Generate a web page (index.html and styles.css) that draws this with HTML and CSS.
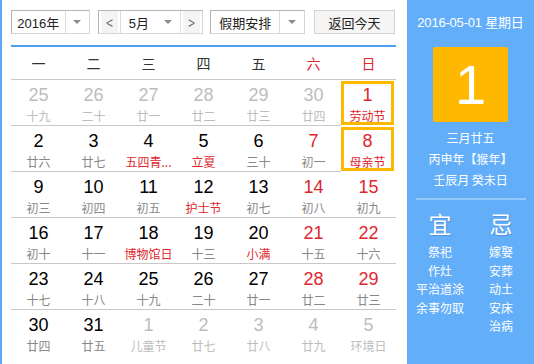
FILE: index.html
```html
<!DOCTYPE html>
<html lang="zh-CN">

<head>
    <meta charset="utf-8">
    <link rel="stylesheet" href="styles.css">
</head>

<body>
    <div class="calendar">
        <div class="calendar__main">
            <div class="toolbar">
                <div class="select select--year">
                    <span class="select__value">2016年</span>
                    <span class="select__arrow"></span>
                </div>
                <div class="month-picker">
                    <span class="month-picker__btn">&lt;</span>
                    <div class="select select--month">
                        <span class="select__value">5月</span>
                        <span class="select__arrow"></span>
                    </div>
                    <span class="month-picker__btn">&gt;</span>
                </div>
                <div class="select select--holiday">
                    <span class="select__value">假期安排</span>
                    <span class="select__arrow"></span>
                </div>
                <button class="today-btn">返回今天</button>
            </div>

            <div class="weekdays">
                <span>一</span><span>二</span><span>三</span><span>四</span><span>五</span>
                <span class="red">六</span><span class="red">日</span>
            </div>

            <div class="days" id="days"></div>
        </div>

        <div class="calendar__side">
            <div class="side__date">2016-05-01 星期日</div>
            <div class="side__day">1</div>
            <div class="side__lunar">
                <p>三月廿五</p>
                <p>丙申年【猴年】</p>
                <p>壬辰月 癸未日</p>
            </div>
            <div class="side__divider"></div>
            <div class="side__advice">
                <div class="advice">
                    <div class="advice__title">宜</div>
                    <p>祭祀</p>
                    <p>作灶</p>
                    <p>平治道涂</p>
                    <p>余事勿取</p>
                </div>
                <div class="advice">
                    <div class="advice__title">忌</div>
                    <p>嫁娶</p>
                    <p>安葬</p>
                    <p>动土</p>
                    <p>安床</p>
                    <p>治病</p>
                </div>
            </div>
        </div>
    </div>

    <script>
        // [day, lunar, flags] flags: o = other month, r = red number, f = festival, s = selected
        const days = [
            ['25', '十九', 'o'], ['26', '二十', 'o'], ['27', '廿一', 'o'], ['28', '廿二', 'o'], ['29', '廿三', 'o'], ['30', '廿四', 'o'], ['1', '劳动节', 'rfs'],
            ['2', '廿六', ''], ['3', '廿七', ''], ['4', '五四青...', 'f'], ['5', '立夏', 'f'], ['6', '三十', ''], ['7', '初一', 'r'], ['8', '母亲节', 'rfs'],
            ['9', '初三', ''], ['10', '初四', ''], ['11', '初五', ''], ['12', '护士节', 'f'], ['13', '初七', ''], ['14', '初八', 'r'], ['15', '初九', 'r'],
            ['16', '初十', ''], ['17', '十一', ''], ['18', '博物馆日', 'f'], ['19', '十三', ''], ['20', '小满', 'f'], ['21', '十五', 'r'], ['22', '十六', 'r'],
            ['23', '十七', ''], ['24', '十八', ''], ['25', '十九', ''], ['26', '二十', ''], ['27', '廿一', ''], ['28', '廿二', 'r'], ['29', '廿三', 'r'],
            ['30', '廿四', ''], ['31', '廿五', ''], ['1', '儿童节', 'o'], ['2', '廿七', 'o'], ['3', '廿八', 'o'], ['4', '廿九', 'o'], ['5', '环境日', 'o']
        ];

        const grid = document.getElementById('days');
        days.forEach(([num, lunar, flags]) => {
            const cell = document.createElement('div');
            cell.className = 'day';
            if (flags.includes('o')) cell.classList.add('day--other');
            if (flags.includes('r')) cell.classList.add('day--red');
            if (flags.includes('f')) cell.classList.add('day--festival');
            if (flags.includes('s')) cell.classList.add('day--selected');
            cell.innerHTML = '<span class="day__num">' + num + '</span><span class="day__lunar">' + lunar + '</span>';
            grid.appendChild(cell);
        });
    </script>
</body>

</html>
```

FILE: styles.css
```css
*,
*::after,
*::before {
    box-sizing: border-box;
}

body {
    margin: 0;
    font-family: "Liberation Sans", "Noto Sans CJK SC", sans-serif;
    background: #fff;
}

p {
    margin: 0;
}

.calendar {
    display: flex;
    width: 534px;
    height: 364px;
    border-left: 2px solid #5aa8f6;
}

.calendar__main {
    width: 405px;
    padding: 10px 11px 0 9px;
}

/* toolbar */
.toolbar {
    display: flex;
    height: 24px;
    font-size: 13px;
    color: #222;
}

.select {
    display: flex;
    border: 1px solid #b4b4b4;
    border-right-color: #d6d6d6;
    border-bottom-color: #d6d6d6;
    background: #fff;
}

.select__value {
    display: flex;
    align-items: center;
    justify-content: center;
    border-right: 1px solid #dcdcdc;
}

.select__arrow {
    display: flex;
    align-items: center;
    justify-content: center;
    width: 24px;
}

.select__arrow::after {
    content: "";
    border-left: 4px solid transparent;
    border-right: 4px solid transparent;
    border-top: 4px solid #8c8c8c;
}

.select--year {
    width: 79px;
}

.select--year .select__value {
    width: 55px;
}

.month-picker {
    display: flex;
    margin-left: 8px;
    width: 105px;
    border: 1px solid #b4b4b4;
    border-right-color: #d6d6d6;
    border-bottom-color: #d6d6d6;
}

.month-picker__btn {
    display: flex;
    align-items: center;
    justify-content: center;
    width: 21px;
    background: #f4f4f4;
    color: #666;
    font-size: 15px;
    transform: scaleX(0.8);
}

.select--month {
    border: none;
    border-left: 1px solid #dcdcdc;
    border-right: 1px solid #dcdcdc;
    width: 61px;
}

.select--month .select__value {
    width: 37px;
    border-right: none;
}

.select--holiday {
    margin-left: 7px;
    width: 95px;
}

.select--holiday .select__value {
    width: 70px;
}

.today-btn {
    margin-left: 9px;
    width: 81px;
    height: 24px;
    padding: 0;
    font: inherit;
    color: #222;
    background: #f5f5f5;
    border: 1px solid #d4d4d4;
}

/* weekday header */
.weekdays {
    display: grid;
    grid-template-columns: repeat(7, 55px);
    margin-top: 11px;
    height: 35px;
    border-top: 2px solid #4d9ff1;
    border-bottom: 1px solid #c8c8c8;
    font-family: "Noto Sans CJK SC", sans-serif;
    font-size: 14px;
    color: #333;
}

.weekdays span {
    display: flex;
    align-items: center;
    justify-content: center;
}

.weekdays .red {
    color: #e0262d;
}

/* day grid */
.days {
    display: grid;
    grid-template-columns: repeat(7, 55px);
    grid-auto-rows: 46px;
}

.day {
    display: flex;
    flex-direction: column;
    align-items: center;
    border-bottom: 1px solid #c8c8c8;
    padding-top: 4px;
    color: #000;
}

.day:nth-last-child(-n+7) {
    border-bottom: none;
}

.day__num {
    font-size: 18px;
    line-height: 22px;
}

.day__lunar {
    font-family: "Noto Sans CJK SC", sans-serif;
    font-size: 12px;
    line-height: 16px;
    margin-top: 2px;
    color: #888;
}

.day--red .day__num {
    color: #e0262d;
}

.day--festival .day__lunar {
    color: #e0262d;
}

.day--other .day__num,
.day--other .day__lunar {
    color: #bdbdbd;
}

.day--selected {
    margin: 1px 2px 1px 0;
    border: 3px solid #ffb800;
    padding-top: 0;
}

/* side panel */
.calendar__side {
    flex: 1;
    background: #63aef9;
    color: #fff;
    display: flex;
    flex-direction: column;
    align-items: center;
    padding-top: 14px;
}

.side__date {
    font-size: 13px;
    line-height: 17px;
    letter-spacing: -0.2px;
}

.side__day {
    margin-top: 16px;
    width: 75px;
    height: 75px;
    background: #ffb800;
    border-radius: 2px;
    display: flex;
    align-items: center;
    justify-content: center;
    font-size: 56px;
}

.side__lunar {
    margin-top: 5px;
    font-family: "Noto Sans CJK SC", sans-serif;
    font-size: 12px;
    line-height: 21px;
    text-align: center;
}

.side__divider {
    margin-top: 8px;
    width: 110px;
    height: 2px;
    background: #96c9fb;
}

.side__advice {
    display: flex;
    gap: 6px;
    margin-top: 7px;
    font-family: "Noto Sans CJK SC", sans-serif;
    font-size: 12px;
    line-height: 18.5px;
}

.advice {
    width: 55px;
    text-align: center;
}

.advice__title {
    font-size: 23px;
    line-height: 32px;
    margin-bottom: 4px;
    text-shadow: 1px 1px 1px rgba(0, 0, 0, 0.15);
}
```
